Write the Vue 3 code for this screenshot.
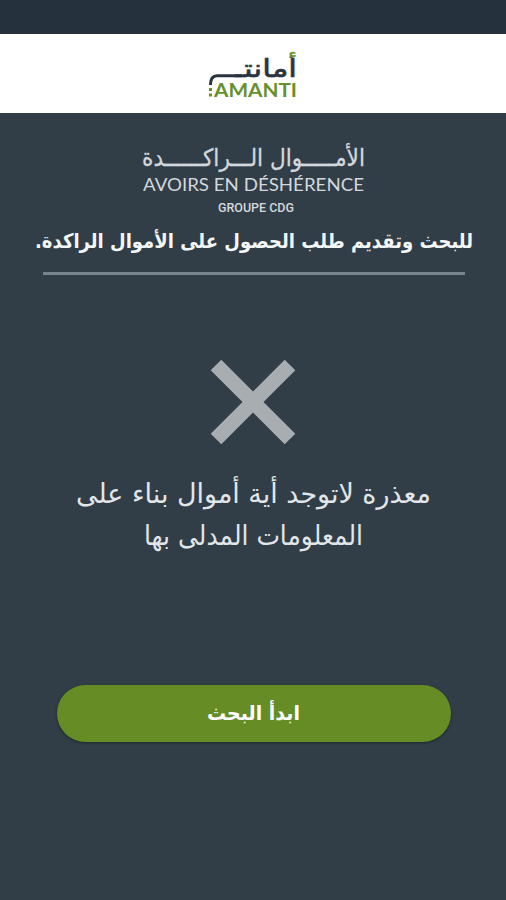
<template>
  <div class="screen">
    <div class="status-bar"></div>

    <header class="app-header">
      <svg class="logo" viewBox="0 0 90 48" width="90" height="48">
        <defs>
          <!-- hamza takes the green of the brand -->
          <linearGradient id="logo-ink" gradientUnits="userSpaceOnUse" x1="0" y1="0" x2="0" y2="30">
            <stop offset="0.21" stop-color="#66902a" />
            <stop offset="0.21" stop-color="#29343f" />
          </linearGradient>
        </defs>
        <text class="logo-ar" x="89" y="26" textLength="62" lengthAdjust="spacingAndGlyphs" direction="rtl">أمانتـ</text>
        <path class="logo-tail" d="M34 24.800H9Q2.500 24.800 2.500 34" />
        <text class="logo-fr" x="6" y="45.500" textLength="83" lengthAdjust="spacingAndGlyphs">AMANTI</text>
        <rect class="logo-dot" x="1" y="37" width="3" height="3" />
        <rect class="logo-dot" x="1" y="42.500" width="3" height="3" />
      </svg>
    </header>

    <main class="content">
      <svg class="brand" viewBox="0 0 226 78" width="226" height="78">
        <text class="brand-ar" x="225" y="29.500" textLength="223" lengthAdjust="spacingAndGlyphs" direction="rtl">{{ brand.arabic }}</text>
        <text class="brand-fr" x="3" y="55" textLength="221" lengthAdjust="spacingAndGlyphs">{{ brand.french }}</text>
        <text class="brand-group" x="78" y="75.500" textLength="76" lengthAdjust="spacingAndGlyphs">{{ brand.group }}</text>
      </svg>

      <svg class="intro" viewBox="0 0 446 46" width="446" height="46">
        <text x="441" y="26" textLength="438" lengthAdjust="spacingAndGlyphs" direction="rtl">{{ intro }}</text>
      </svg>
      <div class="divider"></div>

      <svg class="cross" viewBox="0 0 86 86" width="86" height="86">
        <path d="M6 6L80 80M80 6L6 80" />
      </svg>

      <svg class="message" viewBox="0 0 360 90" width="360" height="90">
        <text
          v-for="line in message"
          :key="line.y"
          :x="line.x"
          :y="line.y"
          :textLength="line.width"
          lengthAdjust="spacingAndGlyphs"
          direction="rtl"
        >{{ line.text }}</text>
      </svg>

      <button class="search-button" type="button">
        <svg viewBox="0 0 96 36" width="96" height="36">
          <text x="94" y="24" textLength="93" lengthAdjust="spacingAndGlyphs" direction="rtl">ابدأ البحث</text>
        </svg>
      </button>
    </main>
  </div>
</template>

<script setup>
const brand = {
  arabic: 'الأمـــــوال الـــراكــــــدة',
  french: 'AVOIRS EN DÉSHÉRENCE',
  group: 'GROUPE CDG'
}

const intro = 'للبحث وتقديم طلب الحصول على الأموال الراكدة.'

const message = [
  { text: 'معذرة لاتوجد أية أموال بناء على', x: 358, y: 31, width: 355 },
  { text: 'المعلومات المدلى بها', x: 290, y: 73, width: 219 }
]
</script>

<style>
body {
  margin: 0;
  background: #313e48;
}
</style>

<style scoped>
.screen {
  display: flex;
  flex-direction: column;
  height: 900px;
  overflow: hidden;
  background: #313e48;
  font-family: "DejaVu Sans", "Noto Sans", sans-serif;
}

.status-bar {
  height: 34px;
  background: #25313c;
}

.app-header {
  display: flex;
  justify-content: center;
  box-sizing: border-box;
  height: 79px;
  padding-top: 17px;
  background: #fff;
}

svg {
  display: block;
  overflow: visible;
}

.logo-ar {
  font-size: 25px;
  fill: url(#logo-ink);
  stroke: url(#logo-ink);
  stroke-width: 0.6;
}

.logo-tail {
  fill: none;
  stroke: #29343f;
  stroke-width: 3;
}

.logo-fr {
  font-family: Lato, sans-serif;
  font-size: 18px;
  font-weight: 700;
  fill: #66902a;
}

.logo-dot {
  fill: #66902a;
}

.content {
  display: flex;
  flex: 1;
  flex-direction: column;
  align-items: center;
}

.brand {
  margin-top: 23px;
  fill: #d3d8dc;
}

.brand-ar {
  font-size: 24px;
  stroke: #d3d8dc;
  stroke-width: 0.3;
}

.brand-fr {
  font-family: Lato, sans-serif;
  font-size: 18px;
}

.brand-group {
  font-family: Roboto, sans-serif;
  font-size: 12px;
  font-weight: 500;
}

.intro {
  margin-top: 8px;
  margin-left: 4px;
  font-size: 20px;
  font-weight: 700;
  fill: #f3f7f9;
}

.divider {
  width: 422px;
  height: 3px;
  margin-top: 4px;
  margin-left: 1px;
  background: #78828a;
}

.cross {
  margin-top: 84px;
  fill: none;
  stroke: #a8adb2;
  stroke-width: 15;
}

.message {
  margin-top: 27px;
  font-size: 27px;
  fill: #e2e6e9;
}

.search-button {
  display: flex;
  align-items: center;
  justify-content: center;
  width: 394px;
  height: 57px;
  margin-top: 123px;
  margin-left: 1px;
  padding: 0;
  border: 0;
  border-radius: 29px;
  background: #658c25;
  box-shadow: 0 1px 3px rgba(0, 0, 0, 0.4);
  font-family: inherit;
  font-size: 20px;
  font-weight: 700;
  fill: #fff;
  cursor: pointer;
}
</style>
